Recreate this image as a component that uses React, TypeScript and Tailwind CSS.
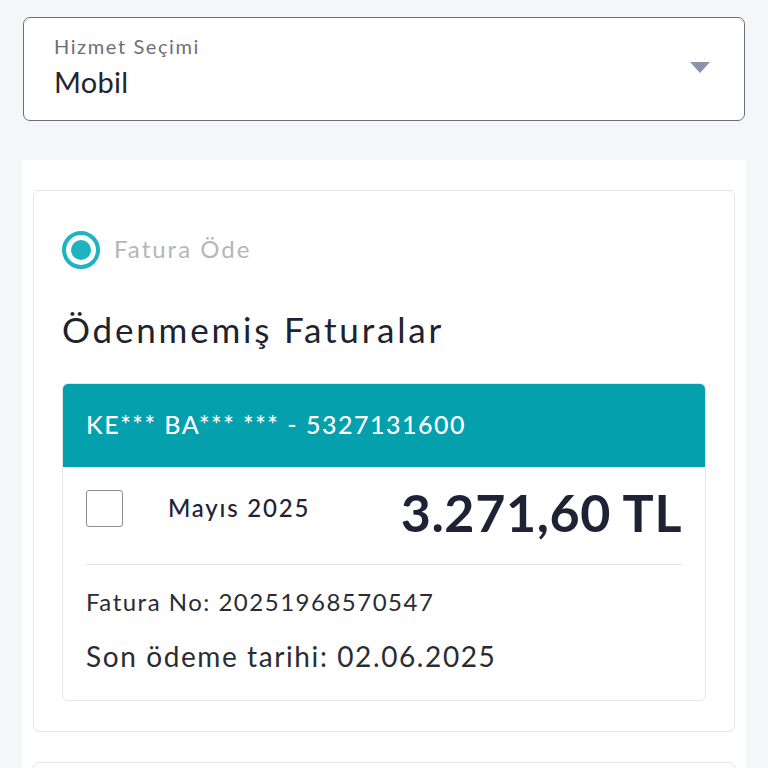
import React from "react";

export default function App() {
  return (
    <div className="min-h-[768px] w-[768px] bg-[#f5f6f8] overflow-hidden" style={{ fontFamily: "Lato, 'Noto Sans', sans-serif" }}>
      <div className="px-[23px] pt-[17px]">
        <div className="h-[104px] rounded-[7px] border border-[#6b6f7a] bg-white flex items-center justify-between pl-[30px] pr-[34px]">
          <div className="flex flex-col">
            <span className="text-[20px] leading-[24px] text-[#6c6f78] tracking-[1.6px] -mt-[4px]">Hizmet Seçimi</span>
            <span className="text-[29px] leading-[36px] text-[#23252c] mt-[6px] tracking-[0.3px]">Mobil</span>
          </div>
          <svg width="20" height="12" viewBox="0 0 20 12" className="-mt-[2px]">
            <path d="M0 0 L20 0 L10 11 Z" fill="#8a93a8" />
          </svg>
        </div>
      </div>
      <div className="mx-[22px] mt-[39px] bg-white px-[11px] pt-[30px] pb-[30px]">
        <div className="rounded-[6px] border border-[#e3e5e8] px-[28px] pt-[40px] pb-[30px]">
          <div className="flex items-center gap-[14px]">
            <div className="w-[38px] h-[38px] rounded-full border-[4px] border-[#1fb3c1] flex items-center justify-center">
              <div className="w-[20px] h-[20px] rounded-full bg-[#1fb3c1]" />
            </div>
            <span className="text-[24px] text-[#b4b6ba] tracking-[2px] -mt-[3px]">Fatura Öde</span>
          </div>
          <div className="mt-[39px] text-[35px] leading-[42px] text-[#20232e] tracking-[2.8px]">Ödenmemiş Faturalar</div>
          <div className="mt-[33px] rounded-[6px] border border-[#e3e5e8] overflow-hidden">
            <div className="h-[83px] bg-[#05a0ad] flex items-center px-[23px]">
              <span className="text-[25px] text-white font-medium tracking-[1.5px] -mt-[2px]">KE*** BA*** *** - 5327131600</span>
            </div>
            <div className="px-[23px]">
              <div className="flex items-center h-[98px] border-b border-[#e2e4e7]">
                <div className="w-[37px] h-[37px] rounded-[3px] border border-[#8b8e95] -mt-[14px]" />
                <span className="ml-[45px] text-[24px] font-medium text-[#1e2235] -mt-[16px] tracking-[1.8px]">Mayıs 2025</span>
                <span className="ml-auto text-[52px] font-bold text-[#1e2235] leading-none tracking-[0.6px] -mt-[8px]">3.271,60 TL</span>
              </div>
              <div className="pt-[22px] text-[24px] leading-[30px] text-[#2a2c33] tracking-[1.5px]">Fatura No: 20251968570547</div>
              <div className="mt-[22px] text-[28px] leading-[34px] text-[#2a2c33] pb-[27px] tracking-[1.6px]">Son ödeme tarihi: 02.06.2025</div>
            </div>
          </div>
        </div>
        <div className="mt-[30px] h-[40px] rounded-[6px] border border-[#e3e5e8]" />
      </div>
    </div>
  );
}
